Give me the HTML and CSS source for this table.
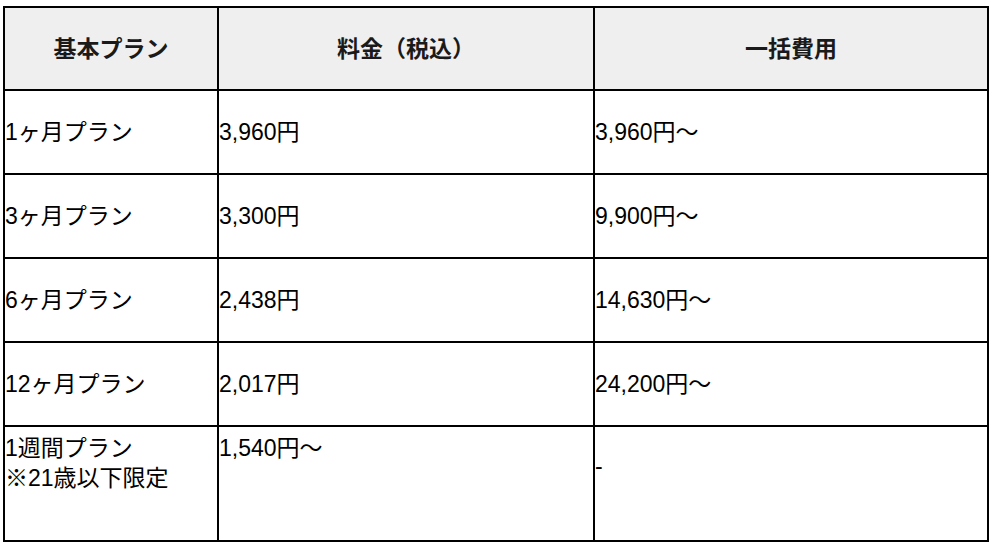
FILE: index.html
```html
<!DOCTYPE html>
<html lang="ja">
<head>
<meta charset="utf-8">
<title>料金プラン</title>
<link rel="stylesheet" href="styles.css">
</head>
<body>
<div class="wrap">
<table class="price-table">
  <thead>
    <tr>
      <th class="c1">基本プラン</th>
      <th class="c2">料金（税込）</th>
      <th class="c3">一括費用</th>
    </tr>
  </thead>
  <tbody>
    <tr><td>1ヶ月プラン</td><td>3,960円</td><td>3,960円〜</td></tr>
    <tr><td>3ヶ月プラン</td><td>3,300円</td><td>9,900円〜</td></tr>
    <tr><td>6ヶ月プラン</td><td>2,438円</td><td>14,630円〜</td></tr>
    <tr><td>12ヶ月プラン</td><td>2,017円</td><td>24,200円〜</td></tr>
    <tr class="tall">
      <td>1週間プラン<br>※21歳以下限定</td>
      <td>1,540円〜</td>
      <td class="dash">-</td>
    </tr>
  </tbody>
</table>
</div>
</body>
</html>
```

FILE: styles.css
```css
html, body {
  margin: 0;
  padding: 0;
  background: #fff;
}

.wrap {
  padding: 6px 0 0 3px;
}

.price-table {
  border-collapse: separate;
  border-spacing: 0;
  table-layout: fixed;
  width: 986px;
  border-top: 2px solid #000;
  border-left: 2px solid #000;
  font-family: "Liberation Sans", "Noto Sans CJK JP", sans-serif;
  font-size: 23px;
  line-height: 30px;
  color: #000;
}

.price-table th,
.price-table td {
  border-right: 2px solid #000;
  border-bottom: 2px solid #000;
  padding: 0;
  vertical-align: middle;
  text-align: left;
  box-sizing: border-box;
}

.price-table th {
  background: #efefef;
  font-weight: bold;
  text-align: center;
  color: #1a1a1a;
  height: 83px;
}

.price-table th.c1 { width: 214px; }
.price-table th.c2 { width: 376px; }
.price-table th.c3 { width: 394px; }

.price-table td {
  height: 84px;
}

.price-table tr.tall td {
  height: 115px;
  vertical-align: top;
  padding-top: 6px;
}

.price-table tr.tall td.dash {
  padding-top: 24px;
}
```
